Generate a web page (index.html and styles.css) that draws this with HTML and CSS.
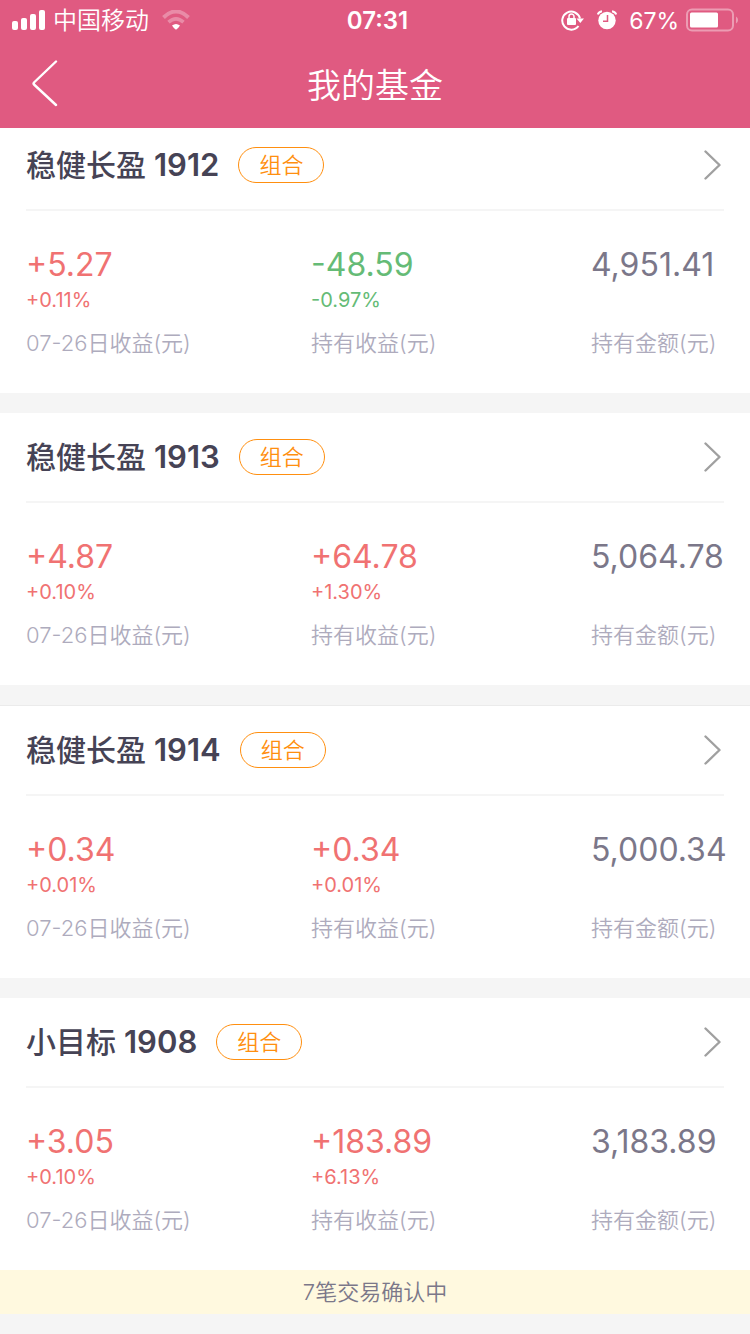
FILE: index.html
```html
<!DOCTYPE html>
<html lang="zh-CN">
<head>
<meta charset="utf-8">
<meta name="viewport" content="width=device-width, initial-scale=1">
<title>我的基金</title>
<link rel="stylesheet" href="styles.css">
</head>
<body>
<header class="top">
  <div class="status">
    <div class="status-side">
      <svg class="signal" width="34" height="20" viewBox="0 0 34 20" fill="#fff" aria-hidden="true">
        <rect x="0" y="11" width="6" height="9" rx="2"/><rect x="9" y="8" width="6" height="12" rx="2"/><rect x="18" y="4" width="6" height="16" rx="2"/><rect x="27" y="0" width="6" height="20" rx="2"/>
      </svg>
      <span class="carrier">中国移动</span>
      <svg class="wifi" width="28" height="20" viewBox="0 0 28 20" fill="none" aria-hidden="true">
        <path d="M1.500 7.500Q14-4.500 26.500 7.500" stroke="#fff" stroke-opacity=".3" stroke-width="4"/>
        <path d="M6.500 12.200Q14 5.500 21.500 12.200" stroke="#fff" stroke-opacity=".3" stroke-width="3.600"/>
        <path d="M10 15.500Q14 12.500 18 15.500Q16.500 18 14 19.800Q11.500 18 10 15.500Z" fill="#fff"/>
      </svg>
    </div>
    <time class="clock">07:31</time>
    <div class="status-side status-right">
      <svg width="24" height="22" viewBox="0 0 24 22" fill="none" aria-hidden="true">
        <path d="M17.500 17A9 9 0 1 1 19 9.500" stroke="#fff" stroke-width="2"/>
        <path d="M15.500 9.500H23L19.300 14Z" fill="#fff"/>
        <rect x="6" y="9" width="9" height="7" rx="1" fill="#fff"/>
        <path d="M8 9.500V7.500a2.500 2.500 0 0 1 5 0v2" stroke="#fff" stroke-width="1.500"/>
      </svg>
      <svg class="alarm" width="20" height="20" viewBox="0 0 20 20" fill="none" aria-hidden="true">
        <circle cx="10" cy="10.500" r="8.700" fill="#fff"/>
        <path d="M10.500 5v6.200H6" stroke="#e05a81" stroke-width="1.500"/>
        <path d="M.8 4.500Q1.500 1.800 5 1.200M15 1.200Q18.500 1.800 19.200 4.500" stroke="#fff" stroke-width="2"/>
      </svg>
      <span class="percent">67%</span>
      <svg width="53" height="24" viewBox="0 0 53 24" fill="none" aria-hidden="true">
        <rect x="1" y="1.500" width="46" height="21" rx="5" stroke="#fff" stroke-opacity=".4" stroke-width="2"/>
        <rect x="4" y="4.500" width="28" height="15" rx="1.500" fill="#fff"/>
        <path d="M50 8.500a4 4 0 0 1 0 7Z" fill="#fff" fill-opacity=".4"/>
      </svg>
    </div>
  </div>
  <nav class="nav">
    <button class="back" type="button" aria-label="返回">
      <svg width="28" height="48" viewBox="0 0 28 48" fill="none" aria-hidden="true"><path d="M24 1.500 2 22.500a1.500 1.500 0 0 0 0 2L24 45" stroke="#fff" stroke-width="2.400" stroke-linecap="round" stroke-linejoin="round"/></svg>
    </button>
    <h1 class="title">我的基金</h1>
  </nav>
</header>

<main class="list">
  <article class="card">
    <a class="card-head" href="#"><h2 class="name">稳健长盈 <span class="series">1912</span></h2><span class="tag">组合</span><svg class="arrow" width="17" height="30" viewBox="0 0 17 30" fill="none" aria-hidden="true"><path d="M1.500 1.500 15.500 15 1.500 28.500"/></svg></a>
    <dl class="stats">
      <div class="stat"><dt class="label">07-26日收益(元)</dt><dd class="value up">+5.27</dd><dd class="rate up">+0.11%</dd></div>
      <div class="stat"><dt class="label">持有收益(元)</dt><dd class="value down">-48.59</dd><dd class="rate down">-0.97%</dd></div>
      <div class="stat"><dt class="label">持有金额(元)</dt><dd class="value">4,951.41</dd></div>
    </dl>
  </article>
  <article class="card">
    <a class="card-head" href="#"><h2 class="name">稳健长盈 <span class="series">1913</span></h2><span class="tag">组合</span><svg class="arrow" width="17" height="30" viewBox="0 0 17 30" fill="none" aria-hidden="true"><path d="M1.500 1.500 15.500 15 1.500 28.500"/></svg></a>
    <dl class="stats">
      <div class="stat"><dt class="label">07-26日收益(元)</dt><dd class="value up">+4.87</dd><dd class="rate up">+0.10%</dd></div>
      <div class="stat"><dt class="label">持有收益(元)</dt><dd class="value up">+64.78</dd><dd class="rate up">+1.30%</dd></div>
      <div class="stat"><dt class="label">持有金额(元)</dt><dd class="value">5,064.78</dd></div>
    </dl>
  </article>
  <article class="card card-ruled">
    <a class="card-head" href="#"><h2 class="name">稳健长盈 <span class="series">1914</span></h2><span class="tag">组合</span><svg class="arrow" width="17" height="30" viewBox="0 0 17 30" fill="none" aria-hidden="true"><path d="M1.500 1.500 15.500 15 1.500 28.500"/></svg></a>
    <dl class="stats">
      <div class="stat"><dt class="label">07-26日收益(元)</dt><dd class="value up">+0.34</dd><dd class="rate up">+0.01%</dd></div>
      <div class="stat"><dt class="label">持有收益(元)</dt><dd class="value up">+0.34</dd><dd class="rate up">+0.01%</dd></div>
      <div class="stat"><dt class="label">持有金额(元)</dt><dd class="value">5,000.34</dd></div>
    </dl>
  </article>
  <article class="card">
    <a class="card-head" href="#"><h2 class="name">小目标 <span class="series">1908</span></h2><span class="tag">组合</span><svg class="arrow" width="17" height="30" viewBox="0 0 17 30" fill="none" aria-hidden="true"><path d="M1.500 1.500 15.500 15 1.500 28.500"/></svg></a>
    <dl class="stats">
      <div class="stat"><dt class="label">07-26日收益(元)</dt><dd class="value up">+3.05</dd><dd class="rate up">+0.10%</dd></div>
      <div class="stat"><dt class="label">持有收益(元)</dt><dd class="value up">+183.89</dd><dd class="rate up">+6.13%</dd></div>
      <div class="stat"><dt class="label">持有金额(元)</dt><dd class="value">3,183.89</dd></div>
    </dl>
    <p class="notice">7笔交易确认中</p>
  </article>
</main>
</body>
</html>
```

FILE: styles.css
```css
* { box-sizing: border-box; }
body {
  margin: 0;
  background: #f5f5f5;
  color: #7b7789;
  font-family: Inter, "Noto Sans CJK SC", sans-serif;
}
h1, h2, p, dl, dd { margin: 0; }

.top { background: #e05a81; color: #fff; }
.status {
  display: grid;
  grid-template-columns: 1fr auto 1fr;
  align-items: center;
  height: 40px;
  padding: 0 11px 0 12px;
}
.status-side { display: flex; align-items: center; }
.status-right { justify-content: flex-end; }
.carrier, .clock, .percent { padding-top: 2px; font-size: 24px; line-height: 38px; }
.carrier { margin: 0 13px 0 7px; font-weight: 350; }
.clock { padding-left: 4px; font-weight: 600; }
.alarm { margin: 0 12px; }
.percent { margin-right: 7px; font-size: 23px; }
.nav {
  display: grid;
  grid-template-columns: 1fr auto 1fr;
  align-items: center;
  height: 88px;
  padding: 0 32px;
}
.back {
  justify-self: start;
  padding: 0;
  border: 0;
  background: none;
  line-height: 0;
}
.title { padding-top: 4px; font-size: 34px; font-weight: 350; line-height: 48px; }

.list { display: flex; flex-direction: column; gap: 20px; }
.card { background: #fff; }
.card-ruled { border-top: 1px solid #ebebeb; }
.card-head {
  display: flex;
  align-items: center;
  margin: 0 26px;
  padding: 26px 3px 26px 0;
  border-bottom: 2px solid #f5f5f5;
  color: #464355;
  text-decoration: none;
}
.card:first-child .card-head { padding-top: 19px; }
.name { font-size: 30px; font-weight: 500; line-height: 36px; }
.series { font-size: 31px; font-weight: 600; }
.tag {
  margin-left: 19px;
  padding: 0 20px;
  border: 1px solid #ff8f0f;
  border-radius: 18px;
  color: #ff8f0f;
  font-size: 22px;
  font-weight: 350;
  line-height: 34px;
}
.arrow { margin-left: auto; stroke: #a0a0a0; stroke-width: 2.4; stroke-linecap: round; stroke-linejoin: round; }

.stats {
  display: grid;
  grid-template-columns: minmax(0, 285fr) minmax(0, 280fr) minmax(0, 133fr);
  padding: 34px 26px;
}
.stat { display: flex; flex-direction: column; white-space: nowrap; }
.value { font-size: 32px; line-height: 40px; }
.rate { margin-bottom: 12px; font-size: 20px; line-height: 30px; }
.label {
  order: 1;
  margin-top: auto;
  color: #aeabbd;
  font-size: 22px;
  font-weight: 350;
  line-height: 32px;
}
.up { color: #f07272; }
.down { color: #65bb76; }

.notice {
  background: #fff9df;
  color: #7b7789;
  font-size: 22px;
  font-weight: 350;
  line-height: 44px;
  text-align: center;
}
```
